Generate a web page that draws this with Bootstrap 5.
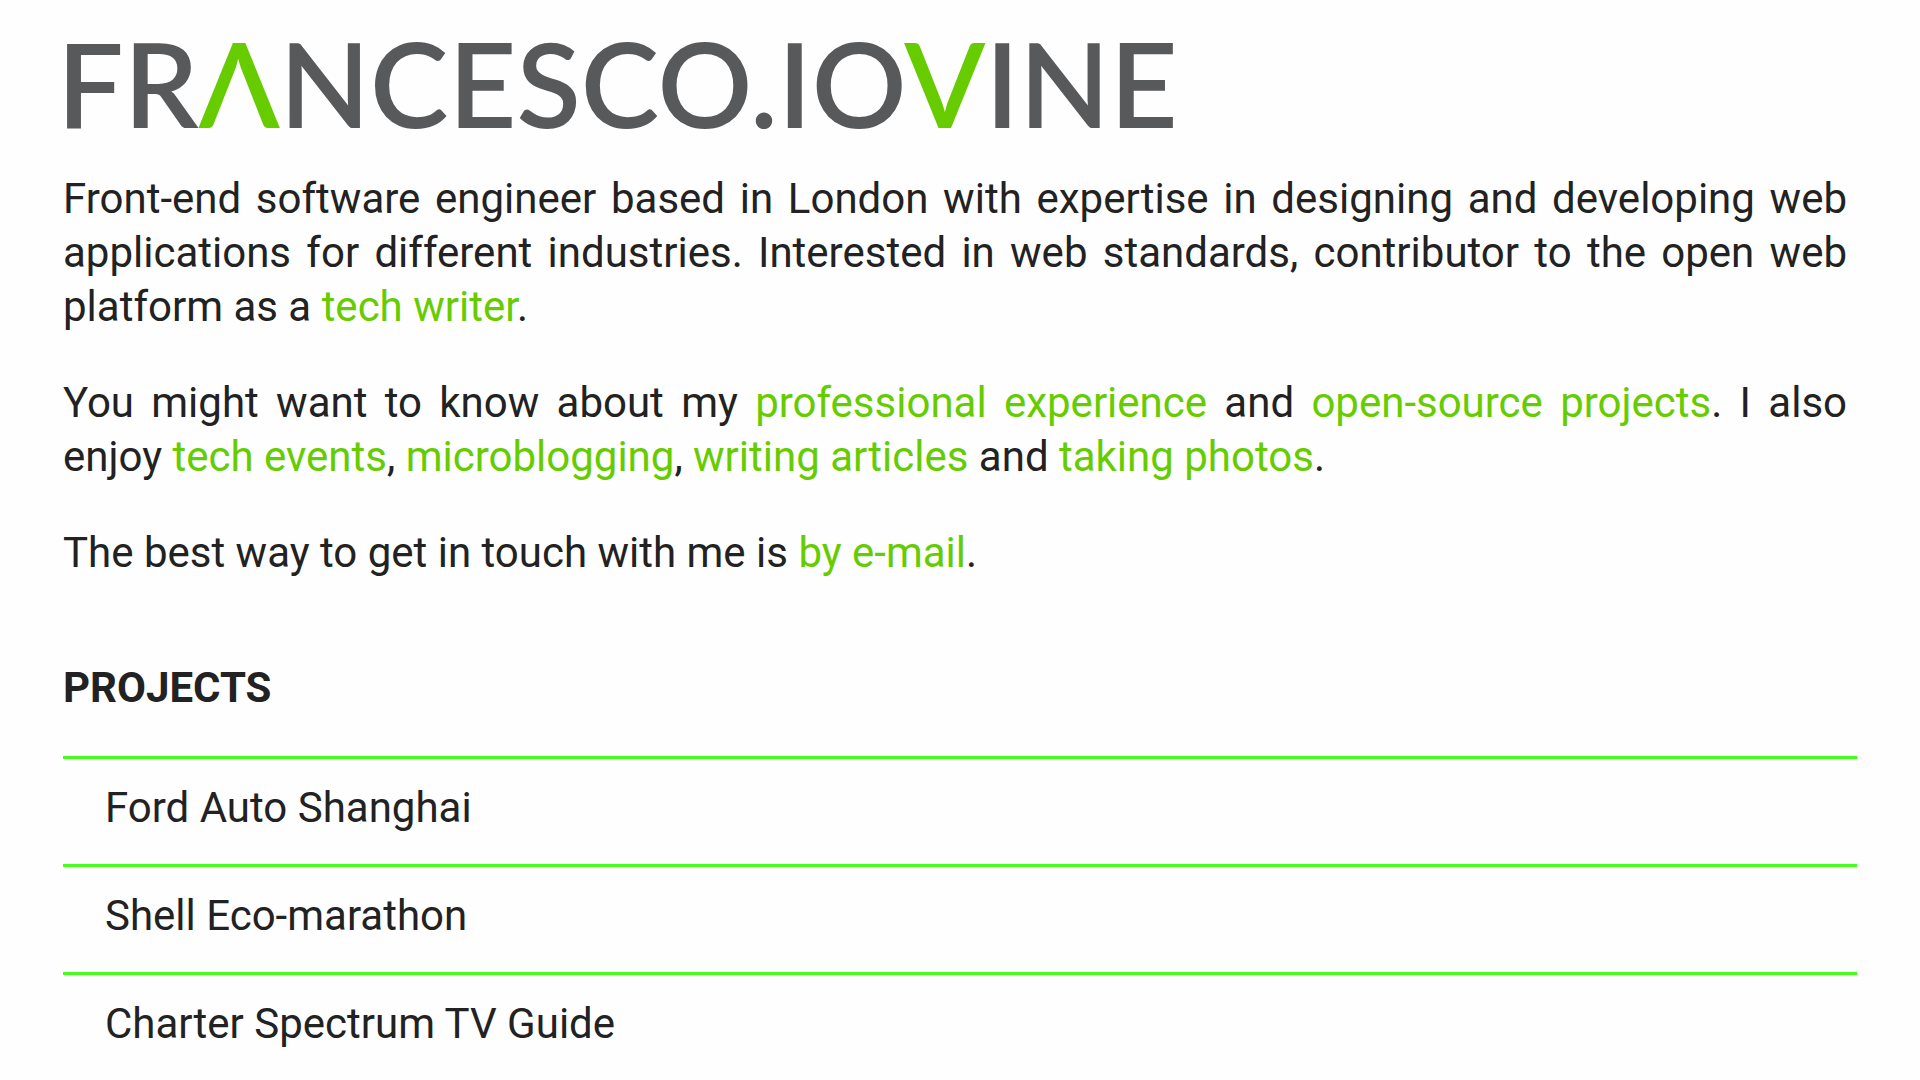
<!DOCTYPE html>
<html lang="en">
<head>
<meta charset="utf-8">
<meta name="viewport" content="width=device-width, initial-scale=1">
<title>Francesco Iovine</title>
<link href="https://cdn.jsdelivr.net/npm/bootstrap@5.3.0/dist/css/bootstrap.min.css" rel="stylesheet">
<style>
body { background: #fefefe; color: #222; font-family: Roboto, sans-serif; font-size: 42px; line-height: 54px; }
.page { padding: 20px 63px 42px; }
.wordmark { font-family: Lato, sans-serif; font-size: 118px; line-height: 126px; font-weight: 600; color: #58595b; margin: 0 0 26px -6px; white-space: nowrap; }
.wordmark span, .intro a { color: #6c0; }
.intro { padding-right: 10px; text-align: justify; margin-bottom: 81px; }
.intro p { margin-bottom: 42px; }
.intro p:last-child { margin-bottom: 0; }
.section-title { font-size: 42px; line-height: 54px; font-weight: 700; margin: 0 0 41px; }
.project { border-top: 3px solid #44ff1c; padding: 22px 42px 29px; }
</style>
</head>
<body>
<main class="page container-fluid">
  <h1 class="wordmark">FR<span>Λ</span>NCESCO.IO<span>V</span>INE</h1>
  <section class="intro">
    <p>Front-end software engineer based in London with expertise in designing and developing web applications for different industries. Interested in web standards, contributor to the open web platform as a <a href="#writer" class="text-decoration-none">tech writer</a>.</p>
    <p>You might want to know about my <a href="#experience" class="text-decoration-none">professional experience</a> and <a href="#projects" class="text-decoration-none">open-source projects</a>. I also enjoy <a href="#events" class="text-decoration-none">tech events</a>, <a href="#microblog" class="text-decoration-none">microblogging</a>, <a href="#articles" class="text-decoration-none">writing articles</a> and <a href="#photos" class="text-decoration-none">taking photos</a>.</p>
    <p>The best way to get in touch with me is <a href="#email" class="text-decoration-none">by e-mail</a>.</p>
  </section>
  <section id="projects">
    <h2 class="section-title text-uppercase">Projects</h2>
    <ul class="list-unstyled mb-0">
      <li class="project">Ford Auto Shanghai</li>
      <li class="project">Shell Eco-marathon</li>
      <li class="project">Charter Spectrum TV Guide</li>
    </ul>
  </section>
</main>
<script src="https://cdn.jsdelivr.net/npm/bootstrap@5.3.0/dist/js/bootstrap.bundle.min.js"></script>
</body>
</html>
